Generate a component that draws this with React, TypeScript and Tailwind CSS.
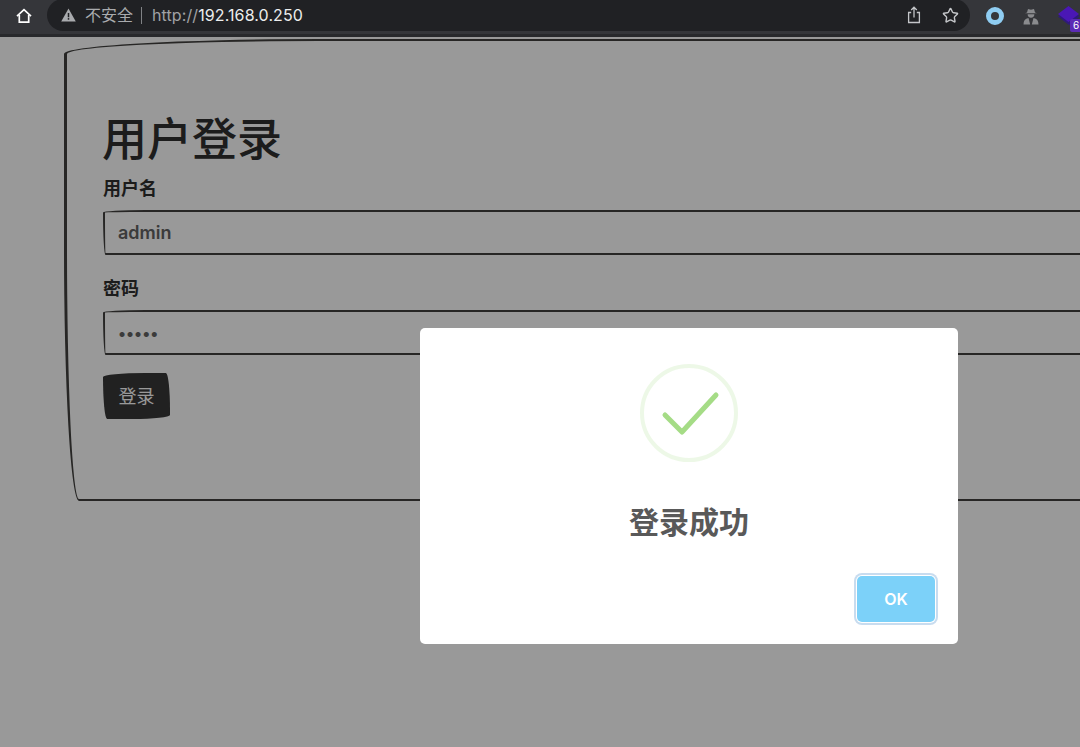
import { Star } from "lucide-react";

const sans = "font-['Inter','Noto_Sans_CJK_SC',sans-serif]";
const sketchy = "rounded-[255px_15px_225px_15px/15px_225px_15px_255px]";

function HomeIcon() {
  return (
    <svg width="16" height="16" viewBox="0 0 16 16" fill="none" stroke="#fff" strokeWidth="1.7" strokeLinejoin="miter">
      <path d="M1 8.2 8 1.6l7 6.6" />
      <path d="M3.3 7v7.2h9.4V7" />
    </svg>
  );
}

function WarningIcon() {
  return (
    <svg width="15" height="14" viewBox="0 0 14 13">
      <path d="M7 .5 13.8 12.5H.2z" fill="#a9abae" />
      <rect x="6.3" y="4.6" width="1.4" height="4" fill="#202124" />
      <rect x="6.3" y="9.4" width="1.4" height="1.5" fill="#202124" />
    </svg>
  );
}

function ShareIcon() {
  return (
    <svg width="14" height="18" viewBox="0 0 14 18" fill="none" stroke="#c4c6c9" strokeWidth="1.3">
      <path d="M4.2 6.5H1.6v10h10.8v-10H9.8" />
      <path d="M7 11.5V1.5M4.2 4 7 1.2 9.8 4" />
    </svg>
  );
}

function SpyIcon() {
  return (
    <svg width="16" height="17" viewBox="0 0 16 17" fill="#8a8b8e">
      <path d="M4 4.500 5 1l3 .7L11 1l1 3.500 2 .8H2z" />
      <path d="M4.600 6.200h6.800C11.400 8.200 10 9.800 8 9.800S4.600 8.200 4.600 6.200z" />
      <path d="M.5 16.500c0-3.600 1.500-5.800 5-6.400L7.200 16.500zM15.500 16.500c0-3.600-1.500-5.800-5-6.400L8.800 16.500z" />
    </svg>
  );
}

function CubeIcon() {
  return (
    <svg width="22" height="20" viewBox="0 0 22 20">
      <path d="M0 10.500 11 19l11-8.500-4-3H4z" fill="#2f1a7a" />
      <path d="M0 8 10.500 0 21 8 10.500 16z" fill="#4a17b5" />
    </svg>
  );
}

function SketchyField({ label, value, top, small }: { label: string; value: string; top: string; small?: boolean }) {
  return (
    <div className={top}>
      <div className="text-[18px] leading-[22px] font-semibold text-[#303030]">{label}</div>
      <div
        className={`mt-[10px] h-[45px] w-[1180px] border-2 border-[#41403e] px-[13px] flex items-center font-semibold text-[#636363] ${small ? "text-[16px]" : "text-[18px]"} ${sketchy}`}
      >
        {value}
      </div>
    </div>
  );
}

export default function App() {
  return (
    <div className={`w-[1080px] h-[747px] overflow-hidden flex flex-col bg-white ${sans}`}>
      <div className="h-[37px] shrink-0 bg-[#35363a] border-b-[3px] border-[#28292c] flex items-start">
        <div className="w-[47px] h-[32px] flex items-center justify-center">
          <HomeIcon />
        </div>
        <div className="w-[923px] h-[32px] -mt-[1px] rounded-full bg-[#202124] flex items-center pl-[14px] pr-[11px]">
          <WarningIcon />
          <span className="ml-[9px] text-[16px] text-[#a9abae]">不安全</span>
          <span className="ml-[8px] h-[17px] w-px bg-[#808285]" />
          <span className="ml-[10px] text-[16px] tracking-[0.1px] text-[#a0a2a5]">
            http://<span className="text-[#eceded]">192.168.0.250</span>
          </span>
          <div className="ml-auto flex items-center gap-[21px]">
            <ShareIcon />
            <Star size={17} color="#c4c6c9" strokeWidth={2} />
          </div>
        </div>
        <div className="flex-1 h-[32px] flex items-center pl-[16px] gap-[19px] relative">
          <div className="w-[18px] h-[18px] rounded-full border-[5px] border-[#8fcdf2] bg-[#35363a]" />
          <SpyIcon />
          <CubeIcon />
          <span className="absolute left-[100px] top-[19px] w-[12px] h-[13px] bg-[#5b2bb5] rounded-[2px] text-[10px] leading-[13px] text-white text-center">
            6
          </span>
        </div>
      </div>

      <div className="relative flex-1 pl-[64px] pt-[2px]">
        <div className={`w-[1250px] h-[462px] border-2 border-l-[3px] border-[#41403e] pl-[36px] pt-[65px] ${sketchy}`}>
          <h1 className="text-[45px] leading-[72px] -mt-[2px] -ml-[1px] font-medium text-[#303030]">用户登录</h1>
          <SketchyField label="用户名" value="admin" top="mt-[2px]" />
          <SketchyField label="密码" value="•••••" top="mt-[23px]" small />
          <button className="mt-[18px] w-[67px] h-[46px] bg-[#383838] text-[18px] text-white rounded-[255px_25px_225px_25px/25px_225px_25px_255px]">
            登录
          </button>
        </div>

        <div className="absolute inset-0 bg-black/40 pl-[420px] pt-[291px]">
          <div className="w-[538px] h-[316px] rounded-[5px] bg-white flex flex-col items-center pt-[35px]">
            <svg width="100" height="100" viewBox="0 0 100 100" fill="none">
              <circle cx="50" cy="50" r="47" stroke="#a5dc86" strokeOpacity="0.2" strokeWidth="4" />
              <path d="M26 52 43 69 77 32" stroke="#a5dc86" strokeWidth="5" strokeLinecap="round" strokeLinejoin="round" />
            </svg>
            <div className="mt-[39px] text-[30px] leading-[40px] font-semibold text-[#595959]">登录成功</div>
            <div className="w-full flex justify-end pr-[23px] pt-[34px]">
              <button className="w-[78px] h-[46px] rounded-[5px] bg-[#7cd1f9] text-white text-[16px] font-semibold ring-[2px] ring-[#c8dcef] ring-offset-1 ring-offset-white">
                OK
              </button>
            </div>
          </div>
        </div>
      </div>
    </div>
  );
}
